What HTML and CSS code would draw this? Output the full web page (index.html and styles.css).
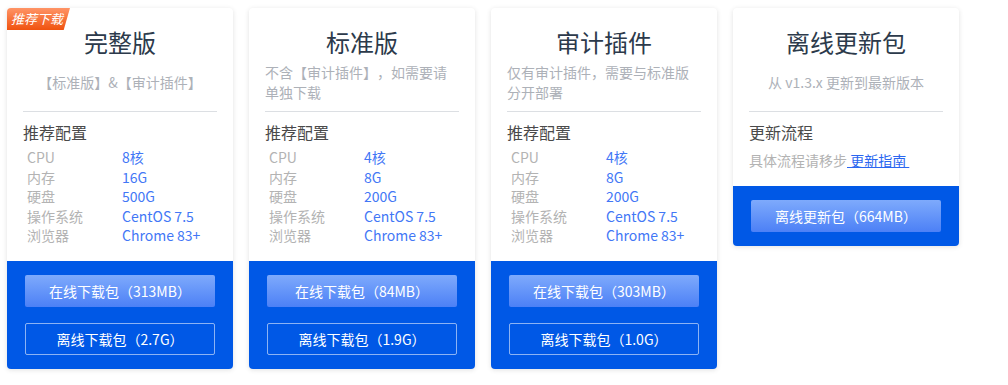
FILE: index.html
```html
<!DOCTYPE html>
<html>
<head>
  <meta charset="utf-8">
  <title>下载</title>
  <link rel="stylesheet" href="styles.css">
</head>
<body>
  <div class="cards">
    <div class="card">
      <div class="badge">推荐下载</div>
      <div class="card-top">
        <div class="title">完整版</div>
        <div class="desc"><span>【标准版】&amp;【审计插件】</span></div>
        <div class="section-title">推荐配置</div>
        <div class="specs">
          <div class="spec"><span class="label">CPU</span><span class="value">8核</span></div>
          <div class="spec"><span class="label">内存</span><span class="value">16G</span></div>
          <div class="spec"><span class="label">硬盘</span><span class="value">500G</span></div>
          <div class="spec"><span class="label">操作系统</span><span class="value">CentOS 7.5</span></div>
          <div class="spec"><span class="label">浏览器</span><span class="value">Chrome 83+</span></div>
        </div>
      </div>
      <div class="card-bottom">
        <a class="btn btn-primary">在线下载包（313MB）</a>
        <a class="btn btn-outline">离线下载包（2.7G）</a>
      </div>
    </div>

    <div class="card">
      <div class="card-top">
        <div class="title">标准版</div>
        <div class="desc"><span>不含【审计插件】，如需要请单独下载</span></div>
        <div class="section-title">推荐配置</div>
        <div class="specs">
          <div class="spec"><span class="label">CPU</span><span class="value">4核</span></div>
          <div class="spec"><span class="label">内存</span><span class="value">8G</span></div>
          <div class="spec"><span class="label">硬盘</span><span class="value">200G</span></div>
          <div class="spec"><span class="label">操作系统</span><span class="value">CentOS 7.5</span></div>
          <div class="spec"><span class="label">浏览器</span><span class="value">Chrome 83+</span></div>
        </div>
      </div>
      <div class="card-bottom">
        <a class="btn btn-primary">在线下载包（84MB）</a>
        <a class="btn btn-outline">离线下载包（1.9G）</a>
      </div>
    </div>

    <div class="card">
      <div class="card-top">
        <div class="title">审计插件</div>
        <div class="desc"><span>仅有审计插件，需要与标准版分开部署</span></div>
        <div class="section-title">推荐配置</div>
        <div class="specs">
          <div class="spec"><span class="label">CPU</span><span class="value">4核</span></div>
          <div class="spec"><span class="label">内存</span><span class="value">8G</span></div>
          <div class="spec"><span class="label">硬盘</span><span class="value">200G</span></div>
          <div class="spec"><span class="label">操作系统</span><span class="value">CentOS 7.5</span></div>
          <div class="spec"><span class="label">浏览器</span><span class="value">Chrome 83+</span></div>
        </div>
      </div>
      <div class="card-bottom">
        <a class="btn btn-primary">在线下载包（303MB）</a>
        <a class="btn btn-outline">离线下载包（1.0G）</a>
      </div>
    </div>

    <div class="card">
      <div class="card-top card-top-short">
        <div class="title">离线更新包</div>
        <div class="desc"><span>从 v1.3.x 更新到最新版本</span></div>
        <div class="section-title">更新流程</div>
        <div class="note">具体流程请移步<a class="link"> 更新指南 </a></div>
      </div>
      <div class="card-bottom">
        <a class="btn btn-primary">离线更新包（664MB）</a>
      </div>
    </div>
  </div>
</body>
</html>
```

FILE: styles.css
```css
body {
  margin: 0;
  padding: 8px 7px;
  background-color: #ffffff;
  font-family: "Noto Sans CJK SC", "Noto Sans", sans-serif;
  color: #333;
  text-spacing-trim: space-all;
}

.cards {
  display: flex;
  align-items: flex-start;
  gap: 16px;
}

.card {
  position: relative;
  width: 226px;
  background-color: #fff;
  border-radius: 4px;
  box-shadow: 0 1px 5px rgba(0, 0, 0, 0.12);
}

.badge {
  position: absolute;
  top: 0;
  left: 0;
  width: 63px;
  height: 22px;
  line-height: 22px;
  padding-left: 4px;
  box-sizing: border-box;
  font-size: 13px;
  font-style: italic;
  color: #fff;
  border-top-left-radius: 4px;
  background: linear-gradient(to bottom, #ff9466, #f0520f);
  clip-path: polygon(0 0, 100% 0, 90% 100%, 0 100%);
}

.card-top {
  padding: 16px 16px 15px;
}

.card-top-short {
  padding-bottom: 16px;
}

.title {
  text-align: center;
  font-size: 24px;
  line-height: 36px;
  color: #2c3a4b;
}

.desc {
  display: flex;
  align-items: center;
  justify-content: center;
  height: 40px;
  margin-top: 2px;
  padding-bottom: 9px;
  border-bottom: 1px solid #dcdfe3;
  font-size: 14px;
  line-height: 20px;
  color: #adb1b8;
}

.section-title {
  margin-top: 8px;
  font-size: 16px;
  line-height: 24px;
  color: #4a4a4a;
}

.specs {
  margin-top: 4px;
  padding-left: 4px;
}

.spec {
  display: flex;
  font-size: 14px;
  line-height: 19.5px;
}

.label {
  width: 95px;
  color: #b3b3b3;
}

.value {
  color: #4277f6;
}

.note {
  margin-top: 6px;
  font-size: 14px;
  line-height: 20px;
  color: #b3b3b3;
}

.link {
  color: #2a66f0;
  text-decoration: underline;
  white-space: pre;
}

.card-bottom {
  display: flex;
  flex-direction: column;
  gap: 16px;
  padding: 14px 18px;
  background-color: #0058e6;
  border-radius: 0 0 4px 4px;
}

.btn {
  display: block;
  height: 32px;
  line-height: 32px;
  text-align: center;
  font-size: 14px;
  color: #fff;
  border-radius: 2px;
  box-sizing: border-box;
  cursor: pointer;
}

.btn-primary {
  background: linear-gradient(to bottom, #7eaafc, #4c80f6);
}

.btn-outline {
  line-height: 30px;
  border: 1px solid rgba(255, 255, 255, 0.55);
}
```
